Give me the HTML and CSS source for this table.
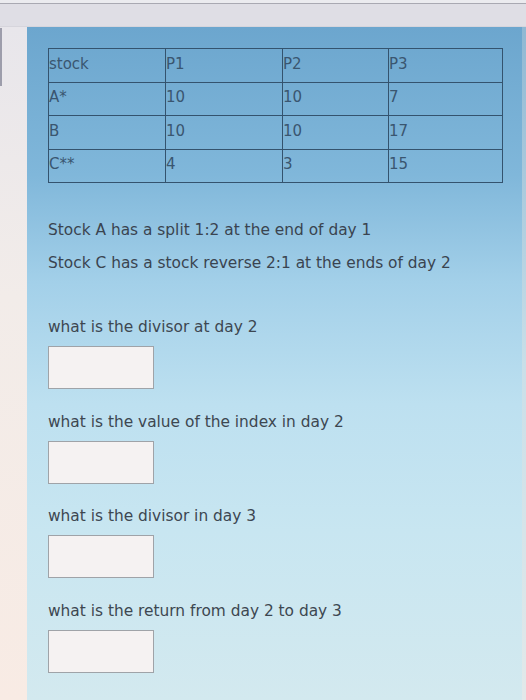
FILE: index.html
```html
<!DOCTYPE html>
<html>
<head>
<meta charset="utf-8">
<link rel="stylesheet" href="styles.css">
</head>
<body>
<div class="topbar"></div>
<div class="main">
  <div class="leftstrip"><div class="edge"></div></div>
  <div class="panel">
    <table class="prices">
      <tr><td>stock</td><td>P1</td><td>P2</td><td>P3</td></tr>
      <tr><td>A*</td><td>10</td><td>10</td><td>7</td></tr>
      <tr><td>B</td><td>10</td><td>10</td><td>17</td></tr>
      <tr><td>C**</td><td>4</td><td>3</td><td>15</td></tr>
    </table>
    <p class="note first">Stock A has a split 1:2 at the end of day 1</p>
    <p class="note">Stock C has a stock reverse 2:1 at the ends of day 2</p>
    <div class="questions">
      <div class="q"><div class="label">what is the divisor at day 2</div><div class="box"></div></div>
      <div class="q"><div class="label">what is the value of the index in day 2</div><div class="box"></div></div>
      <div class="q"><div class="label">what is the divisor in day 3</div><div class="box"></div></div>
      <div class="q"><div class="label">what is the return from day 2 to day 3</div><div class="box"></div></div>
    </div>
  </div>
  <div class="rightstrip"></div>
</div>
</body>
</html>
```
FILE: styles.css
```css
html, body {
  margin: 0;
  padding: 0;
}
body {
  width: 526px;
  height: 700px;
  overflow: hidden;
  background: #ece9ec;
  font-family: "DejaVu Sans", sans-serif;
  color: #3d4853;
}
.topbar {
  height: 23px;
  border-top: 3px solid #ebebef;
  box-shadow: inset 0 1px 0 #a9a9b2;
  background: #dfdee5;
  border-bottom: 1px solid #d6d5dc;
}
.main {
  display: flex;
  height: 673px;
}
.leftstrip {
  width: 27px;
  background: linear-gradient(180deg, #e8e6eb 0%, #f2ece9 40%, #f8ebe4 100%);
}
.edge {
  width: 2px;
  height: 58px;
  margin-top: 1px;
  background: #9d9dab;
}
.panel {
  flex: 1;
  padding: 21px 0 0 21px;
  background: linear-gradient(180deg, #6ca6ce 0%, #80b7da 22%, #a3d0e9 38%, #bde0f0 56%, #c8e6f1 75%, #d3e9ef 100%);
}
.rightstrip {
  width: 4px;
  background: linear-gradient(180deg, #8fb8d3 0%, #c9dfe8 50%, #e2e9ea 100%);
}
.prices {
  border-collapse: collapse;
  width: 455px;
  font-size: 15px;
  color: #3a5670;
}
.prices td {
  border: 1.5px solid #34536e;
  height: 29.5px;
  padding: 0 0 3px 0;
  vertical-align: middle;
  text-align: left;
}
.prices td:nth-child(1) { width: 116px; }
.prices td:nth-child(2) { width: 116px; }
.prices td:nth-child(3) { width: 105px; }
.note {
  margin: 0;
  font-size: 15.4px;
  line-height: 20px;
  color: #3a4450;
}
.note.first {
  margin-top: 37px;
  margin-bottom: 13px;
}
.questions {
  display: flex;
  flex-direction: column;
  gap: 22.5px;
  margin-top: 44px;
}
.q {
  display: flex;
  flex-direction: column;
  gap: 9px;
}
.label {
  font-size: 15.4px;
  line-height: 20px;
  color: #3d4751;
}
.box {
  width: 104px;
  height: 41px;
  border: 1px solid #9fa3a8;
  background: #f5f2f2;
}
```
